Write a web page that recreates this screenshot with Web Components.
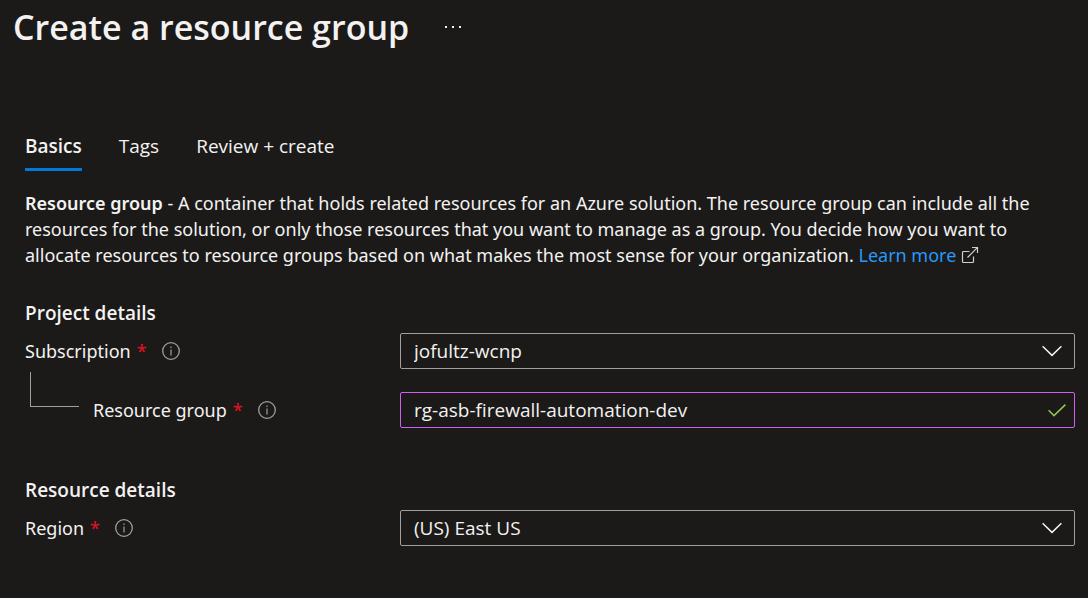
<!DOCTYPE html>
<html lang="en">
<head>
<meta charset="utf-8">
<meta name="viewport" content="width=device-width, initial-scale=1">
<title>Create a resource group</title>
<style>
  html { background: #1b1a19; color-scheme: dark; }
  body { margin: 0; background: #1b1a19; color: #f3f2f1; font: 19px/26px "Open Sans", "Noto Sans", sans-serif; --prose: 18px/26px "Noto Sans", "Open Sans", sans-serif; }
</style>
</head>
<body>
<az-blade heading="Create a resource group">
  <az-tabs slot="tabs" items="Basics|Tags|Review + create"></az-tabs>
  <az-intro><strong>Resource group</strong> - A container that holds related resources for an Azure solution. The resource group can include all the resources for the solution, or only those resources that you want to manage as a group. You decide how you want to allocate resources to resource groups based on what makes the most sense for your organization.</az-intro>
  <az-section heading="Project details">
    <az-field label="Subscription" type="select" value="jofultz-wcnp"></az-field>
    <az-field label="Resource group" type="text" value="rg-asb-firewall-automation-dev" nested></az-field>
  </az-section>
  <az-section heading="Resource details">
    <az-field label="Region" type="select" value="(US) East US"></az-field>
  </az-section>
</az-blade>

<template id="blade">
  <style>
    :host { display: block; }
    header { display: flex; align-items: center; gap: 31px; padding: 3px 13px; }
    h1 { margin: 0; font-size: 34px; line-height: 48px; font-weight: 600; }
    .more { display: flex; border: 0; padding: 4px; background: none; color: inherit; }
    main { padding: 79px 13px 48px 25px; }
  </style>
  <header>
    <h1></h1>
    <button class="more" type="button" aria-label="More actions">
      <svg width="18" height="2" viewBox="0 0 18 2" fill="currentColor" shape-rendering="crispEdges"><path d="M1 0h2v2H1zM8 0h2v2H8zM15 0h2v2h-2z"/></svg>
    </button>
  </header>
  <main>
    <slot name="tabs"></slot>
    <slot></slot>
  </main>
</template>

<template id="tabs">
  <style>
    :host { display: block; }
    div { display: flex; gap: 37px; }
    button { border: 0; border-bottom: 3px solid transparent; padding: 0 0 9px; background: none; color: inherit; font: inherit; }
    button[aria-selected="true"] { border-color: #0078d4; font-weight: 600; }
  </style>
  <div role="tablist"></div>
</template>

<template id="intro">
  <style>
    :host { display: block; }
    p { margin: 19px 12px 0 0; font: var(--prose); }
    ::slotted(strong) { font-weight: 600; }
    a { color: #2899f5; text-decoration: none; white-space: nowrap; }
    svg { vertical-align: -2px; color: #d2d0ce; }
  </style>
  <p><slot></slot> <a href="#learn">Learn more
    <svg width="18" height="18" viewBox="0 0 18 18" fill="none" stroke="currentColor" stroke-width="1.2" aria-hidden="true"><path d="M8.5 5.5h-6a1 1 0 0 0-1 1v9a1 1 0 0 0 1 1h9a1 1 0 0 0 1-1v-5M6.5 11.5l9.8-9.8M11 1.5h5.5V7"/></svg></a></p>
</template>

<template id="section">
  <style>
    :host { display: block; margin-top: 32px; }
    :host(:last-of-type) { margin-top: 49px; }
    h2 { margin: 0 0 7px; font-size: 19px; line-height: 26px; font-weight: 600; }
    .fields { display: grid; gap: 23px; }
  </style>
  <section>
    <h2></h2>
    <div class="fields"><slot></slot></div>
  </section>
</template>

<template id="field">
  <style>
    :host { display: grid; grid-template-columns: 375px minmax(0, 1fr); align-items: center; }
    .caption { display: flex; align-items: center; height: 36px; font: var(--prose); }
    .branch { display: none; }
    :host([nested]) .branch { display: block; align-self: flex-start; box-sizing: border-box; width: 49px; height: 35px; margin: -20px 14px 0 5px; border: solid #a19f9d; border-width: 0 0 1px 1px; }
    .star { color: #e81123; margin-left: 6px; }
    .info { display: flex; margin-left: 15px; padding: 0; border: 0; background: none; color: #a19f9d; }
    .control { position: relative; }
    select, input { appearance: none; display: block; box-sizing: border-box; width: 100%; height: 36px; margin: 0; padding: 0 44px 0 13px; border: 1px solid #a19f9d; border-radius: 2px; background: #1b1a19; color: inherit; font: inherit; outline: 0; }
    input { border-color: #cf5fee; }
    .mark { position: absolute; top: 0; bottom: 0; right: 13px; margin: auto 0; pointer-events: none; }
    .tick { right: 9px; color: #92c353; }
  </style>
  <div class="caption">
    <span class="branch"></span>
    <label for="control"></label>
    <span class="star" aria-hidden="true">*</span>
    <button class="info" type="button" aria-label="More information">
      <svg width="18" height="18" viewBox="0 0 18 18" fill="none" stroke="currentColor"><circle cx="9" cy="9" r="8.3" stroke-width="1.3"/><path d="M9 7.5v6M9 4.5V6" stroke-width="1.2"/></svg>
    </button>
  </div>
  <div class="control"></div>
</template>

<script>
  const CHEVRON = '<svg class="mark" width="20" height="12" viewBox="0 0 20 12" fill="none" stroke="currentColor" stroke-width="1.5" aria-hidden="true"><path d="m.6 1.2 9.4 9.2 9.4-9.2"/></svg>';
  const TICK = '<svg class="mark tick" width="18" height="13" viewBox="0 0 18 13" fill="none" stroke="currentColor" stroke-width="1.5" aria-hidden="true"><path d="m.6 6.2 5.4 5.4L17.4.6"/></svg>';

  class AzElement extends HTMLElement {
    constructor() {
      super();
      const template = document.getElementById(this.localName.slice(3));
      this.attachShadow({ mode: "open" }).append(template.content.cloneNode(true));
    }
  }

  class AzBlade extends AzElement {
    connectedCallback() { this.shadowRoot.querySelector("h1").textContent = this.getAttribute("heading"); }
  }

  class AzTabs extends AzElement {
    connectedCallback() {
      const tabs = this.getAttribute("items").split("|").map((text, index) => {
        const tab = document.createElement("button");
        tab.type = "button";
        tab.setAttribute("role", "tab");
        tab.setAttribute("aria-selected", String(index === 0));
        tab.textContent = text;
        tab.addEventListener("click", () => tabs.forEach(t => t.setAttribute("aria-selected", String(t === tab))));
        return tab;
      });
      this.shadowRoot.querySelector("div").replaceChildren(...tabs);
    }
  }

  class AzIntro extends AzElement {}

  class AzSection extends AzElement {
    connectedCallback() { this.shadowRoot.querySelector("h2").textContent = this.getAttribute("heading"); }
  }

  class AzField extends AzElement {
    connectedCallback() {
      const isSelect = this.getAttribute("type") === "select";
      const value = this.getAttribute("value");
      const control = document.createElement(isSelect ? "select" : "input");
      control.id = "control";
      control.required = true;
      if (isSelect) control.add(new Option(value));
      else { control.type = "text"; control.value = value; control.spellcheck = false; }
      this.shadowRoot.querySelector("label").textContent = this.getAttribute("label");
      const box = this.shadowRoot.querySelector(".control");
      box.replaceChildren(control);
      box.insertAdjacentHTML("beforeend", isSelect ? CHEVRON : TICK);
    }
  }

  customElements.define("az-blade", AzBlade);
  customElements.define("az-tabs", AzTabs);
  customElements.define("az-intro", AzIntro);
  customElements.define("az-section", AzSection);
  customElements.define("az-field", AzField);
</script>
</body>
</html>
